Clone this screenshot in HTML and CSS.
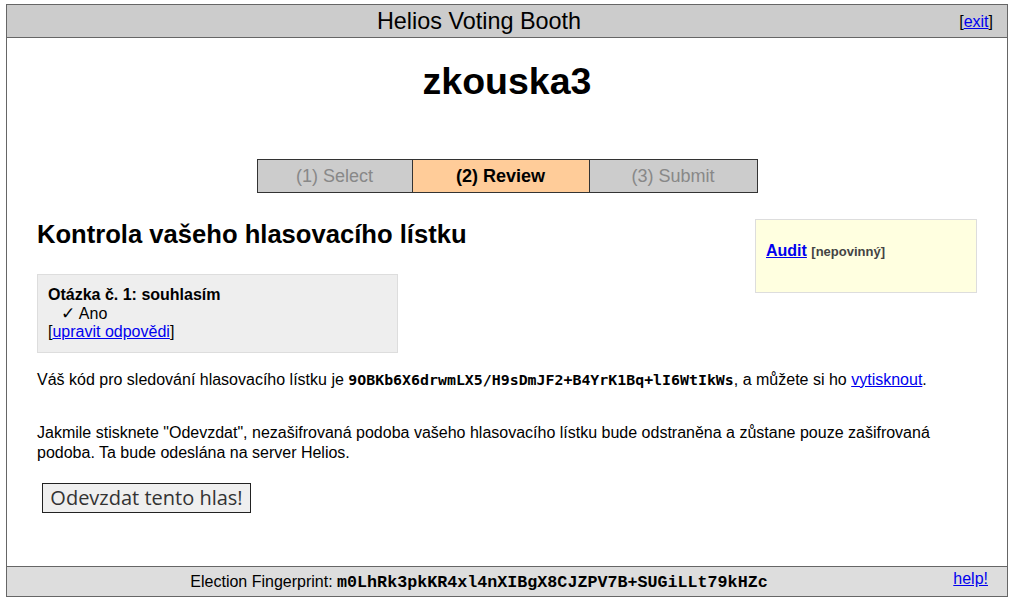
FILE: index.html
```html
<!DOCTYPE html>
<html lang="cs">
<head>
<meta charset="utf-8">
<title>Helios Voting Booth</title>
<link rel="stylesheet" href="styles.css">
</head>
<body>
<div class="booth">
  <header class="topbar">
    <span class="topbar-title">Helios Voting Booth</span>
    <span class="exit">[<a href="#">exit</a>]</span>
  </header>

  <main class="content">
    <h1 class="election-name">zkouska3</h1>

    <table class="steps">
      <tr>
        <td class="step step-1">(1) Select</td>
        <td class="step step-2 current">(2) Review</td>
        <td class="step step-3">(3) Submit</td>
      </tr>
    </table>

    <section class="review">
      <div class="audit">
        <a href="#" class="audit-link">Audit</a> <span class="optional">[nepovinný]</span>
      </div>

      <h2 class="review-title">Kontrola vašeho hlasovacího lístku</h2>

      <div class="answers">
        <div class="question">Otázka č. 1: souhlasím</div>
        <div class="answer"><span class="check">✓</span> Ano</div>
        <div class="edit">[<a href="#">upravit odpovědi</a>]</div>
      </div>

      <p class="tracker">Váš kód pro sledování hlasovacího lístku je <code class="hash">9OBKb6X6drwmLX5/H9sDmJF2+B4YrK1Bq+lI6WtIkWs</code>, a můžete si ho <a href="#">vytisknout</a>.</p>

      <p class="notice">Jakmile stisknete "Odevzdat", nezašifrovaná podoba vašeho hlasovacího lístku bude odstraněna a zůstane pouze zašifrovaná podoba. Ta bude odeslána na server Helios.</p>

      <button class="cast" type="button">Odevzdat tento hlas!</button>
    </section>
  </main>

  <footer class="bottombar">
    <span class="fingerprint">Election Fingerprint: <code class="fp-hash">m0LhRk3pkKR4xl4nXIBgX8CJZPV7B+SUGiLLt79kHZc</code></span>
    <a href="#" class="help">help!</a>
  </footer>
</div>
</body>
</html>
```

FILE: styles.css
```css
html, body {
  margin: 0;
  padding: 0;
  background: #ffffff;
}

body {
  font-family: "Liberation Sans", Arial, sans-serif;
  font-size: 16px;
  color: #000;
}

a {
  color: #0000ee;
}

.booth {
  margin: 4px 7px 0 6px;
  height: 593px;
  box-sizing: border-box;
  border: 1px solid #666;
  display: flex;
  flex-direction: column;
}

.topbar {
  height: 32px;
  background: #cccccc;
  border-bottom: 1px solid #666;
  display: grid;
  grid-template-columns: 1fr 56px;
  align-items: center;
}

.topbar-title {
  text-align: center;
  font-size: 23.4px;
  line-height: 32px;
}

.exit {
  justify-self: end;
  padding-right: 14px;
  font-size: 16px;
  padding-top: 2px;
}

.content {
  flex: 1;
  padding: 0 30px;
}

.election-name {
  margin: 22px 0 0;
  text-align: center;
  font-size: 37.5px;
  line-height: 42px;
  font-weight: bold;
}

.steps {
  margin: 57px auto 0;
  border-collapse: collapse;
  font-size: 18px;
}

.step {
  border: 1px solid #333;
  height: 31px;
  padding: 1px 0 0;
  text-align: center;
  background: #cccccc;
  color: #888;
}

.step-1 { width: 154px; }
.step-2 { width: 176px; }
.step-3 { width: 167px; }

.step.current {
  background: #ffcc99;
  color: #000;
  font-weight: bold;
}

.review {
  display: flow-root;
  margin-top: 26px;
}

.audit {
  float: right;
  width: 200px;
  height: 50px;
  padding: 22px 10px 0;
  background: #ffffe0;
  border: 1px solid #ddd;
  line-height: 18px;
}

.audit-link {
  font-weight: bold;
}

.optional {
  font-size: 13px;
  font-weight: bold;
  color: #444;
}

.review-title {
  margin: 1px 0 0;
  font-size: 25.6px;
  line-height: 28px;
  font-weight: bold;
}

.answers {
  margin-top: 26px;
  width: 339px;
  padding: 11px 10px 10px;
  background: #eeeeee;
  border: 1px solid #ddd;
  line-height: 18.5px;
}

.question {
  font-weight: bold;
}

.answer {
  padding-left: 13px;
}

.check {
  font-family: "DejaVu Sans", sans-serif;
  font-size: 17px;
  line-height: 0;
}

.tracker {
  margin: 17px 0 0;
  line-height: 19px;
}

.hash {
  font-family: "DejaVu Sans Mono", monospace;
  font-size: 14.9px;
  font-weight: bold;
}

.notice {
  margin: 33px 0 0;
  line-height: 20px;
}

.cast {
  display: block;
  margin: 20px 0 0 5px;
  width: 209px;
  height: 30px;
  padding: 0;
  background: #efefef;
  border: 1px solid #222;
  border-radius: 0;
  font-family: "Open Sans", "Noto Sans", sans-serif;
  font-size: 20px;
  line-height: 26px;
  color: #333;
}

.bottombar {
  height: 29px;
  background: #dddddd;
  border-top: 1px solid #666;
  display: grid;
  grid-template-columns: 1fr 56px;
}

.fingerprint {
  text-align: center;
  padding-top: 5px;
  line-height: 20px;
}

.fp-hash {
  font-family: "Liberation Mono", "Courier New", monospace;
  font-size: 16.7px;
  font-weight: bold;
}

.help {
  justify-self: end;
  margin-right: 19px;
  padding-top: 2px;
  line-height: 20px;
  white-space: nowrap;
}
```
